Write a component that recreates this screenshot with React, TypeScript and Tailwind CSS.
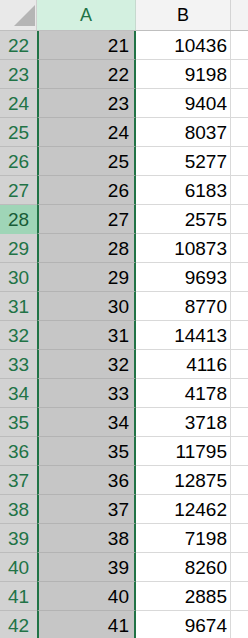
import React from "react";

const rows: [number, number, number][] = [
  [22, 21, 10436],
  [23, 22, 9198],
  [24, 23, 9404],
  [25, 24, 8037],
  [26, 25, 5277],
  [27, 26, 6183],
  [28, 27, 2575],
  [29, 28, 10873],
  [30, 29, 9693],
  [31, 30, 8770],
  [32, 31, 14413],
  [33, 32, 4116],
  [34, 33, 4178],
  [35, 34, 3718],
  [36, 35, 11795],
  [37, 36, 12875],
  [38, 37, 12462],
  [39, 38, 7198],
  [40, 39, 8260],
  [41, 40, 2885],
  [42, 41, 9674],
];

export default function App() {
  return (
    <div
      className="w-[248px] h-[638px] overflow-hidden bg-white text-[19px] leading-none"
      style={{ fontFamily: '"Liberation Sans", Arial, sans-serif' }}
    >
      {/* Header */}
      <div className="grid grid-cols-[37px_99px_95px_1fr] h-[31px] border-b border-[#bfbfbf]">
        <div className="relative bg-[#e9e9e9] border-r border-[#d0d0d0]">
          <svg className="absolute left-[14px] top-[5px]" width="21" height="21" viewBox="0 0 21 21">
            <polygon points="21,0 21,21 0,21" fill="#b5b5b5" />
          </svg>
        </div>
        <div className="flex items-end justify-center pb-[6px] bg-[#d3f0e0] border-r border-[#c6d9ce] text-[#217346] text-[18px]">
          A
        </div>
        <div className="flex items-end justify-center pb-[6px] bg-[#f3f3f3] border-r border-[#d4d4d4] text-black text-[18px]">
          B
        </div>
        <div className="bg-[#f3f3f3]" />
      </div>
      {/* Body */}
      {rows.map(([r, a, b]) => {
        const active = r === 28;
        return (
          <div key={r} className="grid grid-cols-[37px_99px_95px_1fr] h-[29px]">
            <div
              className={
                active
                  ? "flex items-end justify-center pb-[4px] bg-[#9fd5b7] border-b border-[#9fd5b7] text-[#185c37]"
                  : "flex items-end justify-center pb-[4px] bg-[#d2d2d2] border-b border-[#bcbcbc] text-[#217346]"
              }
            >
              {r}
            </div>
            <div className="flex items-end justify-end pb-[4px] pr-[5px] bg-[#c6c6c6] border-x-2 border-x-[#217346] border-b border-b-[#b3b3b3] text-black">
              {a}
            </div>
            <div className="flex items-end justify-end pb-[4px] pr-[3px] bg-white border-r border-b border-[#d9d9d9] text-black">
              {b}
            </div>
            <div className="bg-white border-b border-[#d9d9d9]" />
          </div>
        );
      })}
    </div>
  );
}
